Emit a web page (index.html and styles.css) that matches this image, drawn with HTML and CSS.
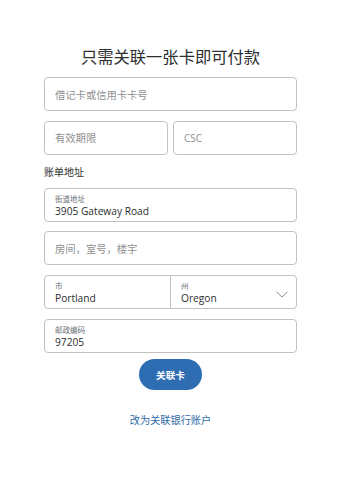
FILE: index.html
```html
<!DOCTYPE html>
<html lang="zh-CN">
<head>
<meta charset="utf-8">
<title>关联卡</title>
<link rel="stylesheet" href="styles.css">
</head>
<body>
<main class="page">
  <h1 class="title">只需关联一张卡即可付款</h1>
  <form class="form">
    <div class="field"><span class="placeholder">借记卡或信用卡卡号</span></div>
    <div class="row">
      <div class="field"><span class="placeholder">有效期限</span></div>
      <div class="field"><span class="placeholder latin">CSC</span></div>
    </div>
    <div class="section-label">账单地址</div>
    <div class="field filled">
      <span class="label">街道地址</span>
      <span class="value">3905 Gateway Road</span>
    </div>
    <div class="field"><span class="placeholder">房间，室号，楼宇</span></div>
    <div class="field split">
      <div class="part">
        <span class="label">市</span>
        <span class="value">Portland</span>
      </div>
      <div class="part select">
        <div class="part-text">
          <span class="label">州</span>
          <span class="value">Oregon</span>
        </div>
        <svg class="chevron" width="12" height="7" viewBox="0 0 12 7"><path d="M0.5 0.8 L6 6 L11.5 0.8" fill="none" stroke="#8c8c8c" stroke-width="1"/></svg>
      </div>
    </div>
    <div class="field filled">
      <span class="label">邮政编码</span>
      <span class="value">97205</span>
    </div>
    <div class="actions">
      <button type="button" class="btn">关联卡</button>
      <a class="link" href="#">改为关联银行账户</a>
    </div>
  </form>
</main>
</body>
</html>
```
FILE: styles.css
```css
* { box-sizing: border-box; }
html, body { margin: 0; padding: 0; background: #ffffff; }
body {
  font-family: "Open Sans", "Noto Sans CJK SC", sans-serif;
  color: #2c2e2f;
}
.page {
  width: 253px;
  margin-left: 44px;
  padding-top: 45px;
}
.title {
  margin: 0;
  font-family: "Noto Sans CJK SC", sans-serif;
  font-weight: 400;
  font-size: 16.3px;
  line-height: 22px;
  text-align: center;
  color: #2c2e2f;
}
.form {
  margin-top: 10px;
  display: flex;
  flex-direction: column;
  gap: 9.6px;
}
.row {
  display: flex;
  gap: 5px;
}
.row .field { flex: 1; }
.field {
  height: 34px;
  border: 1px solid #c2c2c2;
  border-radius: 4px;
  padding: 0 10px;
  display: flex;
  align-items: center;
  background: #fff;
}
.placeholder {
  font-family: "Noto Sans CJK SC", sans-serif;
  font-size: 10.3px;
  color: #8f8f8f;
}
.placeholder.latin {
  font-family: "Open Sans", sans-serif;
  font-size: 10px;
}
.section-label {
  font-family: "Noto Sans CJK SC", sans-serif;
  font-size: 10px;
  line-height: 14px;
  margin-top: 1px;
  margin-bottom: -1px;
  color: #2c2e2f;
}
.field.filled {
  flex-direction: column;
  align-items: flex-start;
  justify-content: flex-start;
  padding-top: 5px;
}
.label {
  display: block;
  font-family: "Noto Sans CJK SC", sans-serif;
  font-size: 7.5px;
  line-height: 10px;
  color: #6c7378;
}
.value {
  display: block;
  font-family: "Open Sans", sans-serif;
  font-weight: 500;
  font-size: 10.2px;
  line-height: 14px;
  color: #2c2e2f;
}
.field.split {
  padding: 0;
  align-items: stretch;
}
.part {
  padding: 5px 10px 0;
}
.part:first-child {
  width: 126px;
  border-right: 1px solid #c2c2c2;
}
.part.select {
  flex: 1;
  display: flex;
  justify-content: space-between;
  padding-right: 8px;
}
.chevron {
  align-self: center;
  margin-bottom: -1px;
}
.actions {
  display: flex;
  flex-direction: column;
  align-items: center;
  margin-top: -3px;
}
.btn {
  width: 63px;
  height: 31px;
  border: none;
  border-radius: 16px;
  background: #2f6db3;
  color: #ffffff;
  font-family: "Noto Sans CJK SC", sans-serif;
  font-weight: 700;
  font-size: 9.6px;
  padding: 0;
}
.link {
  margin-top: 23px;
  font-family: "Noto Sans CJK SC", sans-serif;
  font-size: 10.2px;
  line-height: 14px;
  color: #2f6aa5;
  text-decoration: none;
}
```
